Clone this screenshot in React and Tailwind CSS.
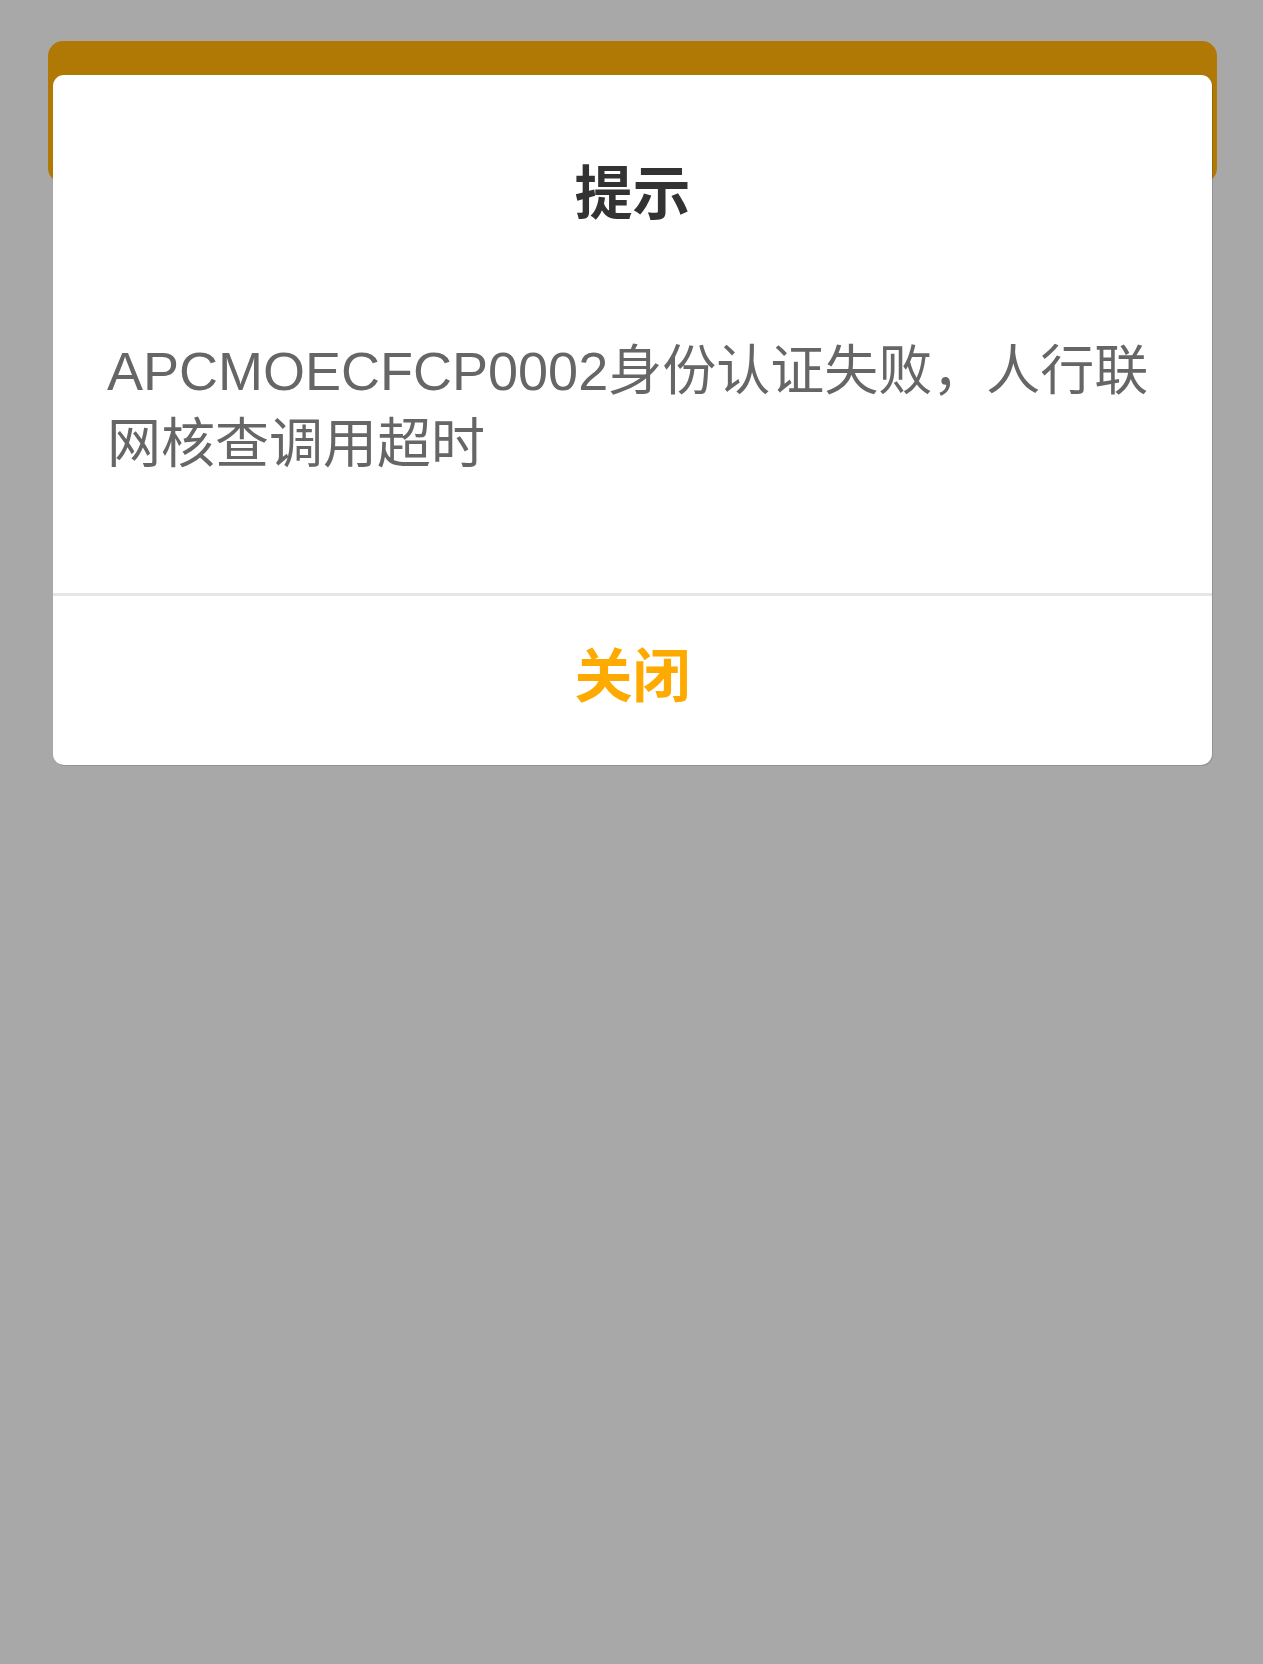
export default function App() {
  return (
    <div className="relative min-h-[1664px] w-full bg-[#a8a8a8] pt-[41px] pl-[48px] pr-[46px] font-['Liberation_Sans','Noto_Sans_CJK_SC',sans-serif]">
      <div className="h-[142px] rounded-[15px] bg-[#b07805]" />

      <div className="absolute left-[53px] top-[75px] w-[1159px] rounded-[11px] bg-white shadow-[1px_1px_0_rgba(0,0,0,0.12)]">
        <h1 className="pt-[79px] text-center text-[58px] font-bold leading-[80px] text-[#333333]">提示</h1>
        <p className="px-[54px] pt-[101px] pb-[112px] text-[54px] leading-[73px] text-[#666666]">
          APCMOECFCP0002身份认证失败，人行联网核查调用超时
        </p>
        <div className="h-[3px] bg-[#e6e6e6]" />
        <button
          type="button"
          className="block w-full pt-[52px] pb-[59px] text-center text-[58px] font-bold leading-[58px] text-[#ffaa00]"
        >
          关闭
        </button>
      </div>
    </div>
  );
}
